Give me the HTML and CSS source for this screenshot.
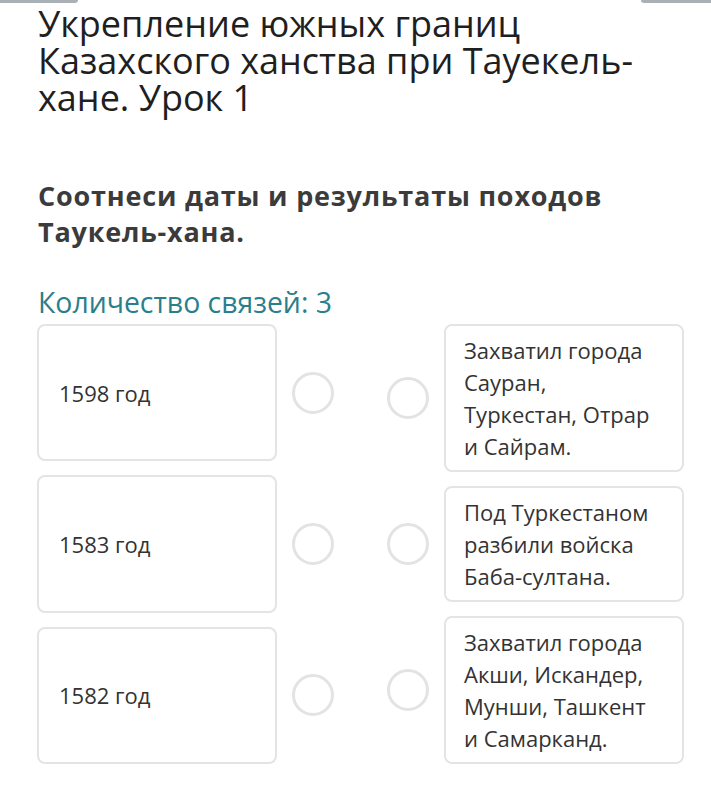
FILE: index.html
```html
<!DOCTYPE html>
<html lang="ru">
<head>
<meta charset="utf-8">
<title>Урок</title>
<link rel="stylesheet" href="styles.css">
</head>
<body>
<div class="topbar">
  <span class="tab tab-left"></span>
  <span class="tab tab-right"></span>
</div>
<main class="page">
  <h1 class="title">Укрепление южных границ Казахского ханства при Тауекель-хане. Урок 1</h1>
  <h2 class="question">Соотнеси даты и результаты походов Таукель-хана.</h2>
  <p class="count">Количество связей: 3</p>
  <div class="match">
    <div class="col col-left">
      <div class="row"><div class="card card-date">1598 год</div><span class="dot"></span></div>
      <div class="row"><div class="card card-date">1583 год</div><span class="dot"></span></div>
      <div class="row"><div class="card card-date">1582 год</div><span class="dot"></span></div>
    </div>
    <div class="col col-right">
      <div class="row"><span class="dot"></span><div class="card card-text">Захватил города Сауран, Туркестан, Отрар и Сайрам.</div></div>
      <div class="row"><span class="dot"></span><div class="card card-text">Под Туркестаном разбили войска Баба-султана.</div></div>
      <div class="row"><span class="dot"></span><div class="card card-text">Захватил города Акши, Искандер, Мунши, Ташкент и Самарканд.</div></div>
    </div>
  </div>
</main>
</body>
</html>
```

FILE: styles.css
```css
html, body {
  margin: 0;
  padding: 0;
  background: #ffffff;
}

body {
  font-family: "Open Sans", "Noto Sans", sans-serif;
  color: #333333;
  width: 711px;
  height: 799px;
  overflow: hidden;
}

.topbar {
  display: flex;
  justify-content: space-between;
  height: 3px;
}

.tab {
  display: block;
  height: 3px;
  background: #a9b0b6;
}

.tab-left {
  width: 78px;
  border-radius: 0 0 3px 0;
}

.tab-right {
  width: 70px;
  border-radius: 0 0 0 3px;
}

.page {
  padding: 2px 28px 0 37px;
}

.title {
  margin: 0;
  padding-left: 1px;
  font-size: 36px;
  line-height: 37px;
  font-weight: 400;
  color: #1f1f1f;
}

.question {
  margin: 62px 0 0 0;
  padding-left: 1px;
  font-size: 27px;
  line-height: 36px;
  font-weight: 700;
  letter-spacing: 0.8px;
  color: #3b3b3b;
}

.count {
  margin: 35px 0 0 0;
  padding-left: 1px;
  font-size: 28.4px;
  line-height: 34px;
  color: #2a7f8c;
}

.match {
  margin-top: 5px;
  display: flex;
  gap: 53px;
  align-items: stretch;
}

.col {
  display: flex;
  flex-direction: column;
  gap: 14px;
}

.row {
  display: flex;
  align-items: center;
  gap: 15px;
}

.col-left .row {
  flex: 1;
}

.col-left .row .card {
  align-self: stretch;
}

.card {
  box-sizing: border-box;
  width: 240px;
  border: 2px solid #e4e4e4;
  border-radius: 8px;
  background: #ffffff;
  font-size: 22px;
  line-height: 32px;
  color: #333333;
}

.card-date {
  display: flex;
  align-items: center;
  padding: 0 20px;
}

.card-text {
  padding: 8px 24px 8px 18px;
}

.dot {
  display: block;
  box-sizing: border-box;
  width: 42px;
  height: 42px;
  border: 3px solid #e3e3e3;
  border-radius: 50%;
  flex: none;
}
```
